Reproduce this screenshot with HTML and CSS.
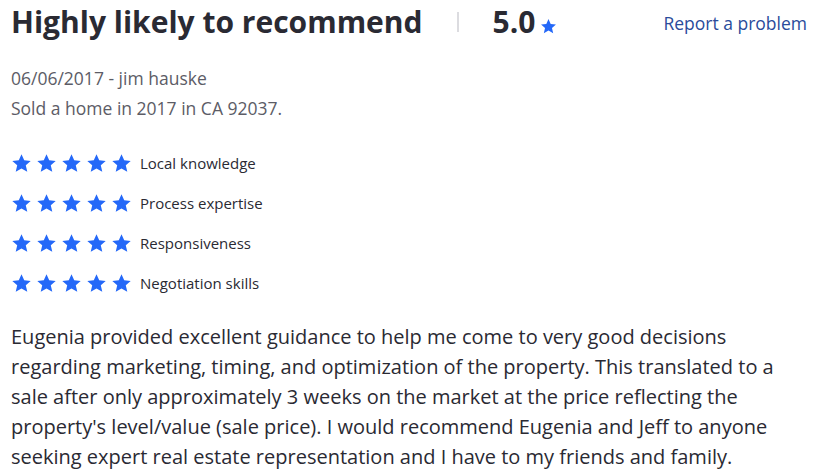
FILE: index.html
```html
<!DOCTYPE html>
<html>
<head>
<meta charset="utf-8">
<link rel="stylesheet" href="styles.css">
</head>
<body>
<div class="review">
  <div class="header">
    <h1 class="title">Highly likely to recommend</h1>
    <span class="divider"></span>
    <span class="score">5.0</span>
    <svg class="star-sm" viewBox="0 0 24 24"><path d="M12 1.5l3.1 6.9 7.4.7-5.6 5 1.7 7.4L12 17.6l-6.6 3.9 1.7-7.4-5.6-5 7.4-.7z"/></svg>
    <a class="report" href="#">Report a problem</a>
  </div>
  <div class="meta first">06/06/2017 - jim hauske</div>
  <div class="meta">Sold a home in 2017 in CA 92037.</div>
  <div class="ratings">
    <div class="rating"><span class="stars">
      <svg viewBox="0 0 24 24"><path d="M12 1.5l3.1 6.9 7.4.7-5.6 5 1.7 7.4L12 17.6l-6.6 3.9 1.7-7.4-5.6-5 7.4-.7z"/></svg><svg viewBox="0 0 24 24"><path d="M12 1.5l3.1 6.9 7.4.7-5.6 5 1.7 7.4L12 17.6l-6.6 3.9 1.7-7.4-5.6-5 7.4-.7z"/></svg><svg viewBox="0 0 24 24"><path d="M12 1.5l3.1 6.9 7.4.7-5.6 5 1.7 7.4L12 17.6l-6.6 3.9 1.7-7.4-5.6-5 7.4-.7z"/></svg><svg viewBox="0 0 24 24"><path d="M12 1.5l3.1 6.9 7.4.7-5.6 5 1.7 7.4L12 17.6l-6.6 3.9 1.7-7.4-5.6-5 7.4-.7z"/></svg><svg viewBox="0 0 24 24"><path d="M12 1.5l3.1 6.9 7.4.7-5.6 5 1.7 7.4L12 17.6l-6.6 3.9 1.7-7.4-5.6-5 7.4-.7z"/></svg>
    </span><span class="label">Local knowledge</span></div>
    <div class="rating"><span class="stars">
      <svg viewBox="0 0 24 24"><path d="M12 1.5l3.1 6.9 7.4.7-5.6 5 1.7 7.4L12 17.6l-6.6 3.9 1.7-7.4-5.6-5 7.4-.7z"/></svg><svg viewBox="0 0 24 24"><path d="M12 1.5l3.1 6.9 7.4.7-5.6 5 1.7 7.4L12 17.6l-6.6 3.9 1.7-7.4-5.6-5 7.4-.7z"/></svg><svg viewBox="0 0 24 24"><path d="M12 1.5l3.1 6.9 7.4.7-5.6 5 1.7 7.4L12 17.6l-6.6 3.9 1.7-7.4-5.6-5 7.4-.7z"/></svg><svg viewBox="0 0 24 24"><path d="M12 1.5l3.1 6.9 7.4.7-5.6 5 1.7 7.4L12 17.6l-6.6 3.9 1.7-7.4-5.6-5 7.4-.7z"/></svg><svg viewBox="0 0 24 24"><path d="M12 1.5l3.1 6.9 7.4.7-5.6 5 1.7 7.4L12 17.6l-6.6 3.9 1.7-7.4-5.6-5 7.4-.7z"/></svg>
    </span><span class="label">Process expertise</span></div>
    <div class="rating"><span class="stars">
      <svg viewBox="0 0 24 24"><path d="M12 1.5l3.1 6.9 7.4.7-5.6 5 1.7 7.4L12 17.6l-6.6 3.9 1.7-7.4-5.6-5 7.4-.7z"/></svg><svg viewBox="0 0 24 24"><path d="M12 1.5l3.1 6.9 7.4.7-5.6 5 1.7 7.4L12 17.6l-6.6 3.9 1.7-7.4-5.6-5 7.4-.7z"/></svg><svg viewBox="0 0 24 24"><path d="M12 1.5l3.1 6.9 7.4.7-5.6 5 1.7 7.4L12 17.6l-6.6 3.9 1.7-7.4-5.6-5 7.4-.7z"/></svg><svg viewBox="0 0 24 24"><path d="M12 1.5l3.1 6.9 7.4.7-5.6 5 1.7 7.4L12 17.6l-6.6 3.9 1.7-7.4-5.6-5 7.4-.7z"/></svg><svg viewBox="0 0 24 24"><path d="M12 1.5l3.1 6.9 7.4.7-5.6 5 1.7 7.4L12 17.6l-6.6 3.9 1.7-7.4-5.6-5 7.4-.7z"/></svg>
    </span><span class="label">Responsiveness</span></div>
    <div class="rating"><span class="stars">
      <svg viewBox="0 0 24 24"><path d="M12 1.5l3.1 6.9 7.4.7-5.6 5 1.7 7.4L12 17.6l-6.6 3.9 1.7-7.4-5.6-5 7.4-.7z"/></svg><svg viewBox="0 0 24 24"><path d="M12 1.5l3.1 6.9 7.4.7-5.6 5 1.7 7.4L12 17.6l-6.6 3.9 1.7-7.4-5.6-5 7.4-.7z"/></svg><svg viewBox="0 0 24 24"><path d="M12 1.5l3.1 6.9 7.4.7-5.6 5 1.7 7.4L12 17.6l-6.6 3.9 1.7-7.4-5.6-5 7.4-.7z"/></svg><svg viewBox="0 0 24 24"><path d="M12 1.5l3.1 6.9 7.4.7-5.6 5 1.7 7.4L12 17.6l-6.6 3.9 1.7-7.4-5.6-5 7.4-.7z"/></svg><svg viewBox="0 0 24 24"><path d="M12 1.5l3.1 6.9 7.4.7-5.6 5 1.7 7.4L12 17.6l-6.6 3.9 1.7-7.4-5.6-5 7.4-.7z"/></svg>
    </span><span class="label">Negotiation skills</span></div>
  </div>
  <p class="body">Eugenia provided excellent guidance to help me come to very good decisions regarding marketing, timing, and optimization of the property. This translated to a sale after only approximately 3 weeks on the market at the price reflecting the property's level/value (sale price). I would recommend Eugenia and Jeff to anyone seeking expert real estate representation and I have to my friends and family.</p>
</div>
</body>
</html>
```

FILE: styles.css
```css
html, body {
  margin: 0;
  padding: 0;
  background: #fff;
}
body {
  font-family: "Open Sans", "Noto Sans", sans-serif;
  color: #2a2a33;
}
.review {
  padding: 0 11px;
}
.header {
  display: flex;
  align-items: center;
  height: 44px;
}
.title {
  margin: 0;
  font-size: 30px;
  font-weight: 700;
  line-height: 44px;
  color: #2a2a33;
}
.divider {
  width: 2px;
  height: 20px;
  background: #dcdce0;
  margin: 0 34px 0 34px;
}
.score {
  font-size: 30px;
  font-weight: 700;
  line-height: 44px;
  color: #2a2a33;
}
.star-sm {
  width: 17px;
  height: 17px;
  fill: #2468f8;
  margin: 8px 0 0 5px;
}
.report {
  margin-left: auto;
  font-size: 17.5px;
  color: #2a4b9b;
  text-decoration: none;
  margin-right: 9px;
  align-self: flex-start;
  line-height: 46px;
}
.meta {
  font-size: 17.5px;
  line-height: 30px;
  color: #5c5c66;
}
.meta.first {
  margin-top: 19px;
}
.ratings {
  margin-top: 27px;
  display: flex;
  flex-direction: column;
  gap: 14px;
}
.rating {
  display: flex;
  align-items: center;
  height: 26px;
}
.stars {
  display: flex;
  gap: 4px;
  width: 129px;
}
.stars svg {
  width: 21px;
  height: 21px;
  fill: #2468f8;
}
.label {
  font-size: 15px;
  color: #2a2a33;
}
.body {
  margin: 26px 0 0 0;
  font-size: 20px;
  line-height: 30px;
  color: #2a2a33;
  max-width: 780px;
}
```
